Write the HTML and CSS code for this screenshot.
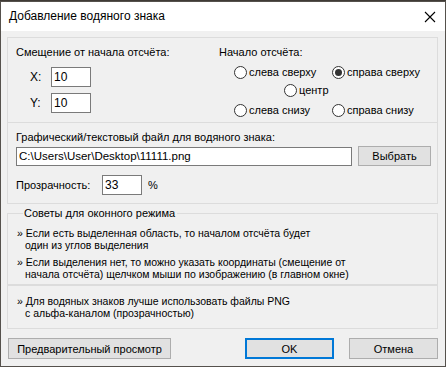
FILE: index.html
```html
<!DOCTYPE html>
<html lang="ru">

<head>
  <meta charset="UTF-8">
  <title>Добавление водяного знака</title>
  <link rel="stylesheet" href="styles.css">
</head>

<body>
  <div class="window">
    <div class="titlebar">
      <span class="title">Добавление водяного знака</span>
      <svg class="close" width="12" height="12" viewBox="0 0 12 12">
        <path d="M1 1 L11 11 M11 1 L1 11" stroke="#000" stroke-width="1.1" fill="none" />
      </svg>
    </div>

    <div class="client">
      <div class="panel offset">
        <div class="offset-left">
          <div class="caption">Смещение от начала отсчёта:</div>
          <div class="coord-row">
            <span class="coord-label">X:</span>
            <input class="field coord" type="text" value="10">
          </div>
          <div class="coord-row">
            <span class="coord-label">Y:</span>
            <input class="field coord" type="text" value="10">
          </div>
        </div>
        <div class="offset-right">
          <div class="caption">Начало отсчёта:</div>
          <div class="radio-row">
            <label class="radio-item wide"><span class="radio"></span>слева сверху</label>
            <label class="radio-item"><span class="radio checked"></span>справа сверху</label>
          </div>
          <div class="radio-row center">
            <label class="radio-item"><span class="radio"></span>центр</label>
          </div>
          <div class="radio-row">
            <label class="radio-item wide"><span class="radio"></span>слева снизу</label>
            <label class="radio-item"><span class="radio"></span>справа снизу</label>
          </div>
        </div>
      </div>

      <div class="panel file">
        <div class="caption">Графический/текстовый файл для водяного знака:</div>
        <div class="file-row">
          <input class="field path" type="text" value="C:\Users\User\Desktop\11111.png">
          <button class="btn browse">Выбрать</button>
        </div>
        <div class="opacity-row">
          <span class="opacity-label">Прозрачность:</span>
          <input class="field opacity" type="text" value="33">
          <span class="percent">%</span>
        </div>
      </div>

      <fieldset class="tips">
        <legend>Советы для оконного режима</legend>
        <div class="tip">» Если есть выделенная область, то началом отсчёта будет<br>один из углов выделения</div>
        <div class="tip">» Если выделения нет, то можно указать координаты (смещение от<br>начала отсчёта) щелчком мыши по изображению (в главном окне)</div>
        <div class="tip separated">» Для водяных знаков лучше использовать файлы PNG<br>с альфа-каналом (прозрачностью)</div>
      </fieldset>

      <div class="buttons">
        <button class="btn preview">Предварительный просмотр</button>
        <div class="spacer"></div>
        <button class="btn ok">OK</button>
        <button class="btn cancel">Отмена</button>
      </div>
    </div>
  </div>
</body>

</html>
```

FILE: styles.css
```css
* {
  box-sizing: border-box;
  margin: 0;
  padding: 0;
}

body {
  background: #3f3a35;
  font-family: 'Liberation Sans', Arial, sans-serif;
  font-size: 11px;
  color: #000;
  padding-top: 1px;
}

.window {
  width: 446px;
  height: 366px;
  border: 1px solid #55514c;
  background: #f0f0f0;
  display: flex;
  flex-direction: column;
}

.titlebar {
  height: 29px;
  background: #fff;
  display: flex;
  align-items: center;
  justify-content: space-between;
  padding: 0 9px 0 8px;
}

.title {
  font-size: 12px;
  padding-bottom: 1px;
}

.client {
  flex: 1;
  padding: 6px 7px 0 6px;
}

.panel {
  border: 1px solid #dcdcdc;
}

.caption {
  height: 15px;
  line-height: 15px;
}

/* offset + origin */
.offset {
  height: 86px;
  display: flex;
  padding: 7px 0 0 8px;
}

.offset-left {
  width: 203px;
}

.coord-row {
  display: flex;
  align-items: center;
  margin-top: 6px;
  padding-left: 14px;
}

.offset-left .caption + .coord-row {
  margin-top: 7px;
}

.coord-label {
  width: 21px;
  font-size: 12px;
}

.field {
  font-family: inherit;
  font-size: 12px;
  border: 1px solid #7a7a7a;
  background: #fff;
  height: 20px;
  padding: 0 2px;
  outline: none;
  color: #000;
}

.coord {
  width: 40px;
}

.offset-right {
  flex: 1;
}

.radio-row {
  display: flex;
  height: 18px;
  align-items: center;
  padding-left: 15px;
}

.offset-right .caption + .radio-row {
  margin-top: 3px;
}

.radio-row.center + .radio-row {
  margin-top: 2px;
}

.radio-row.center {
  padding-left: 65px;
}

.radio-item {
  display: flex;
  align-items: center;
  gap: 2px;
}

.radio-item.wide {
  width: 98px;
}

.radio {
  width: 13px;
  height: 13px;
  border: 1px solid #333;
  border-radius: 50%;
  background: #fff;
  display: flex;
  align-items: center;
  justify-content: center;
}

.radio.checked::after {
  content: '';
  width: 7px;
  height: 7px;
  border-radius: 50%;
  background: #333;
}

/* file */
.file {
  height: 81px;
  border-top: none;
  padding: 7px 0 0 8px;
}

.file-row {
  display: flex;
  align-items: center;
  margin-top: 1px;
}

.path {
  width: 336px;
  height: 19px;
  font-size: 11.5px;
}

.btn {
  font-family: inherit;
  font-size: 11px;
  background: #e1e1e1;
  border: 1px solid #adadad;
  color: #000;
  height: 21px;
}

.browse {
  width: 73px;
  height: 20px;
  margin-left: 6px;
}

.opacity-row {
  display: flex;
  align-items: center;
  margin-top: 9px;
}

.opacity-label {
  width: 86px;
}

.opacity {
  width: 40px;
}

.percent {
  margin-left: 6px;
}

/* tips */
.tips {
  margin-top: 2px;
  border: 1px solid #dcdcdc;
  height: 123px;
  padding: 6px 0 0 9px;
}

.tips legend {
  margin-left: 6px;
  padding: 0 2px 0 1px;
  line-height: 15px;
}

.tip {
  line-height: 12px;
  font-size: 10.5px;
  padding-left: 8px;
  text-indent: -8px;
}

.tip + .tip {
  margin-top: 5px;
}

.tip.separated {
  border-top: 2px solid #dcdcdc;
  margin: 4px 0 0 -9px;
  padding: 9px 0 0 17px;
}

.buttons {
  display: flex;
  margin-top: 9px;
  padding-left: 1px;
}

.preview {
  width: 163px;
}

.spacer {
  flex: 1;
}

.ok,
.cancel {
  width: 89px;
}

.ok {
  border: 2px solid #0078d7;
}

.cancel {
  margin-left: 15px;
}
```
